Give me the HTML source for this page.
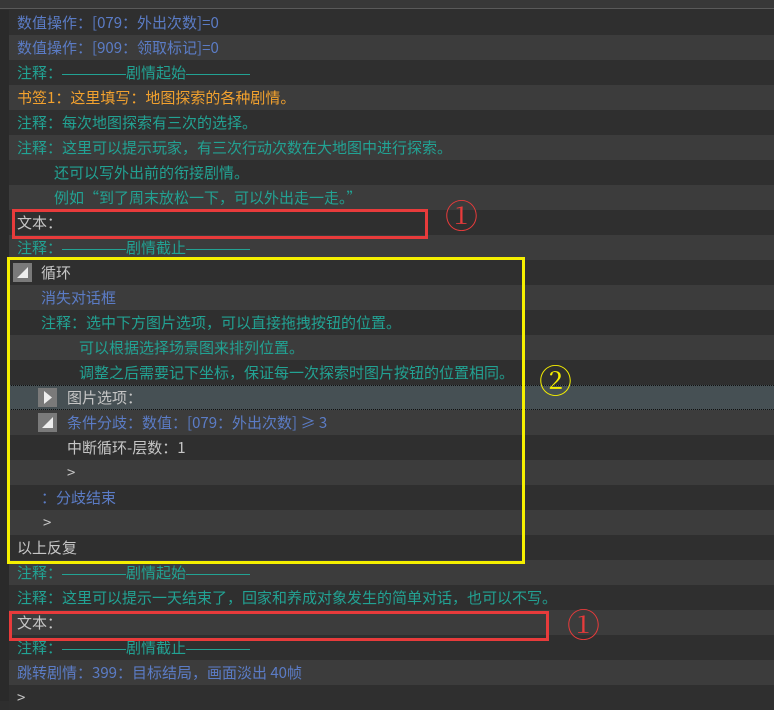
<!DOCTYPE html>
<html><head><meta charset="utf-8"><style>
*{margin:0;padding:0;box-sizing:border-box}
body{width:774px;height:701px;overflow:hidden;background:#2e2e2e;font-family:"Noto Sans CJK SC","Liberation Sans",sans-serif;font-size:15px;position:relative}
.top{position:absolute;left:0;top:0;width:774px;height:9px;background:#383838;border-bottom:1px solid #5a5a5a}
.left{position:absolute;left:0;top:10px;width:9px;height:691px;background:#2a2a2a}
.r{position:absolute;left:9px;width:765px;height:25px;line-height:25px;white-space:nowrap}
.d{background:#2f2f2f}.l{background:#3c3c3c}
.sel{background:#465054;border-top:1px dotted #111;border-bottom:1px dotted #111;line-height:23px}
.b{color:#5b7cc6}.t{color:#22a293}.o{color:#f2a12e}.w{color:#c6c6c6}
.r>span{position:absolute;top:0}
.dl{display:inline-block;width:64px;height:1px;background:#22a293;vertical-align:middle;margin-top:1px}
.ic{position:absolute;width:19px;height:19px;top:3px;background:#7a7a7a}
.box{position:absolute;border:3px solid}
.c{position:absolute;font-family:"Liberation Serif","Noto Serif CJK SC",serif;font-size:33px;line-height:36px}
</style></head><body>
<div class="top"></div><div class="left"></div>
<div class="r d" style="top:10px"><span class="b" style="left:8px">数值操作：[079：外出次数]=0</span></div>
<div class="r l" style="top:35px"><span class="b" style="left:8px">数值操作：[909：领取标记]=0</span></div>
<div class="r d" style="top:60px"><span class="t" style="left:8px">注释：<i class="dl"></i>剧情起始<i class="dl"></i></span></div>
<div class="r l" style="top:85px"><span class="o" style="left:8px">书签1：这里填写：地图探索的各种剧情。</span></div>
<div class="r d" style="top:110px"><span class="t" style="left:8px">注释：每次地图探索有三次的选择。</span></div>
<div class="r l" style="top:135px"><span class="t" style="left:8px">注释：这里可以提示玩家，有三次行动次数在大地图中进行探索。</span></div>
<div class="r d" style="top:160px"><span class="t" style="left:45px">还可以写外出前的衔接剧情。</span></div>
<div class="r l" style="top:185px"><span class="t" style="left:45px">例如“到了周末放松一下，可以外出走一走。”</span></div>
<div class="r d" style="top:210px"><span class="w" style="left:8px">文本：</span></div>
<div class="r l" style="top:235px"><span class="t" style="left:8px">注释：<i class="dl"></i>剧情截止<i class="dl"></i></span></div>
<div class="r d" style="top:260px"><div class="ic" style="left:4px"><svg width="19" height="19"><polygon points="4,15 15,15 15,4" fill="#eee"/></svg></div><span class="w" style="left:32px">循环</span></div>
<div class="r l" style="top:285px"><span class="b" style="left:32px">消失对话框</span></div>
<div class="r d" style="top:310px"><span class="t" style="left:32px">注释：选中下方图片选项，可以直接拖拽按钮的位置。</span></div>
<div class="r l" style="top:335px"><span class="t" style="left:70px">可以根据选择场景图来排列位置。</span></div>
<div class="r d" style="top:360px"><span class="t" style="left:70px">调整之后需要记下坐标，保证每一次探索时图片按钮的位置相同。</span></div>
<div class="r sel" style="top:385px"><div class="ic" style="left:29px;top:2px"><svg width="19" height="19"><polygon points="6,3 14,9.5 6,16" fill="#eee"/></svg></div><span class="w" style="left:58px">图片选项：</span></div>
<div class="r l" style="top:410px"><div class="ic" style="left:29px"><svg width="19" height="19"><polygon points="4,15 15,15 15,4" fill="#eee"/></svg></div><span class="b" style="left:58px">条件分歧：数值：[079：外出次数] ≥ 3</span></div>
<div class="r d" style="top:435px"><span class="w" style="left:58px">中断循环-层数：1</span></div>
<div class="r l" style="top:460px"><span class="w" style="left:58px">&gt;</span></div>
<div class="r d" style="top:485px"><span class="b" style="left:32px">：分歧结束</span></div>
<div class="r l" style="top:510px"><span class="w" style="left:34px">&gt;</span></div>
<div class="r d" style="top:535px"><span class="w" style="left:8px">以上反复</span></div>
<div class="r l" style="top:560px"><span class="t" style="left:8px">注释：<i class="dl"></i>剧情起始<i class="dl"></i></span></div>
<div class="r d" style="top:585px"><span class="t" style="left:8px">注释：这里可以提示一天结束了，回家和养成对象发生的简单对话，也可以不写。</span></div>
<div class="r l" style="top:610px"><span class="w" style="left:8px">文本：</span></div>
<div class="r d" style="top:635px"><span class="t" style="left:8px">注释：<i class="dl"></i>剧情截止<i class="dl"></i></span></div>
<div class="r l" style="top:660px"><span class="b" style="left:8px">跳转剧情：399：目标结局，画面淡出 40帧</span></div>
<div class="r d" style="top:685px"><span class="w" style="left:8px">&gt;</span></div>
<div class="box" style="left:12px;top:209px;width:416px;height:30px;border-color:#e83b3b"></div>
<div class="box" style="left:9px;top:611px;width:540px;height:30px;border-color:#e83b3b"></div>
<div class="box" style="left:7px;top:257px;width:518px;height:307px;border-color:#f5ef00"></div>
<div class="c" style="left:445px;top:200px;color:#e83b3b">①</div>
<div class="c" style="left:539px;top:365px;color:#f5ef00">②</div>
<div class="c" style="left:567px;top:609px;color:#e83b3b">①</div>
</body></html>
